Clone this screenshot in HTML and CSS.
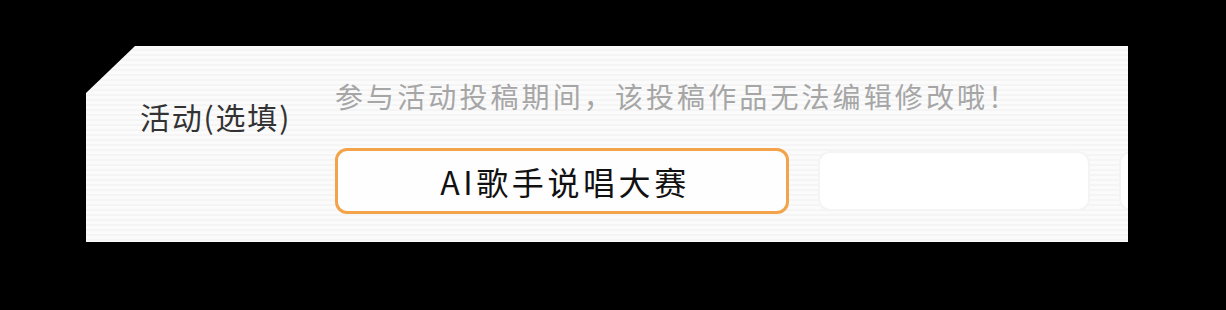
FILE: index.html
```html
<!DOCTYPE html>
<html lang=zh-CN>
<head>
  <meta charset=utf-8>
  <title>活动(选填)</title>
  <meta name=viewport content='width=device-width, initial-scale=1.0'>
  <link rel="stylesheet" href="styles.css">
</head>
<body>
  <div class=panel>
    <div class=label>活动(选填)</div>
    <div class=field>
      <p class=hint>参与活动投稿期间，该投稿作品无法编辑修改哦！</p>
      <div class=options>
        <button class='opt on'>AI歌手说唱大赛</button>
        <button class=opt></button>
        <button class=opt></button>
      </div>
    </div>
  </div>
</body>
</html>
```

FILE: styles.css
```css
/* page */

html, body {
  margin: 0;
  background: #000;
  height: 100%;
}

body {
  padding-top: 46px;
  box-sizing: border-box;
  font-family: "Noto Sans CJK SC", "Noto Sans", sans-serif;
  overflow: hidden;
}

/* white panel with cut top-left corner */

.panel {
  margin-left: 86px;
  width: 1042px;
  height: 196px;
  box-sizing: border-box;
  padding-left: 54px;
  display: flex;
  overflow: hidden;
  background: repeating-linear-gradient(#fbfbfb 0 3px, #f5f5f6 3px 5px);
  clip-path: polygon(49px 0, 100% 0, 100% 100%, 0 100%, 0 47px);
}

.label {
  width: 195px;
  flex: none;
  padding-top: 52px;
  font-size: 30px;
  line-height: 36px;
  letter-spacing: 1.8px;
  color: #333;
}

.field {
  flex: none;
}

.hint {
  margin: 30px 0 0;
  font-size: 28px;
  line-height: 40px;
  letter-spacing: 3.1px;
  color: #a6a6a6;
}

/* activity options */

.options {
  display: flex;
  gap: 29px;
  margin-top: 32px;
  align-items: center;
}

.opt {
  flex: none;
  width: 272px;
  height: 60px;
  padding: 0;
  border: 2px solid #f4f4f5;
  border-radius: 12px;
  background: #fff;
  font: inherit;
}

.opt.on {
  width: 454px;
  height: 66px;
  padding-left: 6px;
  border: 3px solid #f3a34a;
  background: #fefefe;
  font-size: 32px;
  letter-spacing: 3.6px;
  color: #111;
}
```
